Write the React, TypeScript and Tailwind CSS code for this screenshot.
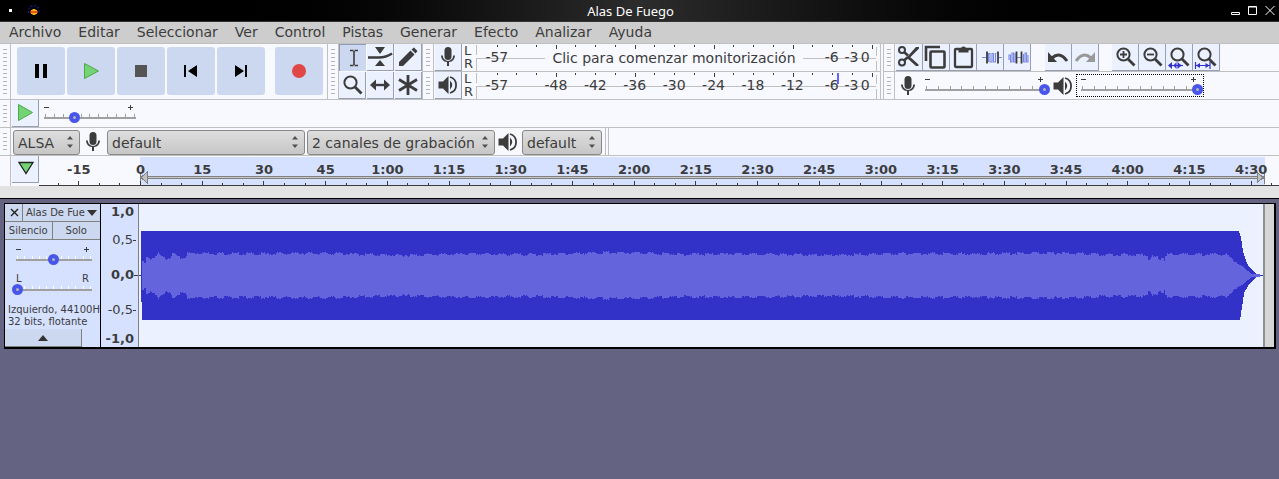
import { ReactNode } from "react";

const ink = "#3c3c3c";

function Grip({ small, plain }: { small?: boolean; plain?: boolean }) {
  const n = plain ? 0 : small ? 5 : 12;
  return (
    <span className="flex w-[11px] shrink-0 flex-col items-center justify-center gap-[3px] border-r border-[#c0c0c0]">
      {Array.from({ length: n }, (_, i) => (
        <i key={i} className="block h-px w-1 bg-[#b4b4b4]" />
      ))}
    </span>
  );
}

function Tool({ label, children, pressed }: { label: string; children: ReactNode; pressed?: boolean }) {
  return (
    <button
      type="button"
      aria-label={label}
      className={
        pressed
          ? "flex h-[27px] w-[27px] shrink-0 items-center justify-center border-t border-l border-[#8c99b8] bg-[#ccd8f0]"
          : "flex h-[27px] w-[27px] shrink-0 items-center justify-center border-r border-b border-[#979fb5] bg-[#ebf1ff]"
      }
    >
      <svg width="26" height="26" viewBox="0 0 26 26" fill="none" stroke={ink} strokeWidth="2">
        {children}
      </svg>
    </button>
  );
}

function MicShape() {
  return (
    <g stroke="none" fill={ink}>
      <rect x="9.5" y="3" width="7" height="13" rx="3.5" />
      <path d="M6 11.5h1.8a5.2 5.4 0 0 0 10.4 0H20a7 7 0 0 1-6 6.6V22h-2v-3.9a7 7 0 0 1-6-6.6z" />
    </g>
  );
}

function SpeakerShape() {
  return (
    <g>
      <path d="M3.5 9.5H8L13.5 4v18L8 16.5H3.5z" fill={ink} stroke="none" />
      <path d="M15 8.5q4.5 4.5 0 9z" fill={ink} stroke="none" />
      <path d="M15 5a8.3 8.3 0 0 1 0 16" strokeWidth="1.8" />
    </g>
  );
}

function Icon({ children }: { children: ReactNode }) {
  return (
    <svg className="shrink-0" width="26" height="26" viewBox="0 0 26 26" fill="none" stroke={ink} aria-hidden="true">
      {children}
    </svg>
  );
}

function Loupe() {
  return (
    <g>
      <circle cx="11.500" cy="10.500" r="6.100" />
      <path d="M15.500 14.500l7 7" strokeWidth="2.800" />
    </g>
  );
}

function Transport({ label, children }: { label: string; children: ReactNode }) {
  return (
    <button type="button" aria-label={label} className="flex size-12 shrink-0 items-center justify-center rounded-[3px] bg-[#ccd8f0]">
      <svg width="24" height="24" viewBox="0 0 24 24">{children}</svg>
    </button>
  );
}

const thumb =
  "[&::-webkit-slider-thumb]:size-[11px] [&::-webkit-slider-thumb]:appearance-none [&::-webkit-slider-thumb]:rounded-full [&::-webkit-slider-thumb]:border-4 [&::-webkit-slider-thumb]:border-[#4855ea] [&::-webkit-slider-thumb]:bg-[#b4b4b4]";

function Slider({ label, value, light, letters }: { label: string; value: number; light?: boolean; letters?: boolean }) {
  return (
    <div className="flex w-full flex-col">
      <span aria-hidden="true" className="flex h-[9px] items-start justify-between pr-[7px] pl-1 text-[10px] leading-[6px]">
        {letters ? (
          <>
            <span>L</span>
            <span>R</span>
          </>
        ) : (
          <>
            <svg width="5" height="7" viewBox="0 0 5 7" stroke={ink}><path d="M0 3.500h5" /></svg>
            <svg width="5" height="7" viewBox="0 0 5 7" stroke={ink}><path d="M0 3.500h5M2.500 1v5" /></svg>
          </>
        )}
      </span>
      <span className="flex h-1 items-end justify-between px-[5px]">
        {Array.from({ length: 11 }, (_, i) => (
          <i key={i} className={light ? "block h-[3px] w-px bg-white" : "block h-[3px] w-px bg-[#a0a0a0]"} />
        ))}
      </span>
      <input
        type="range"
        aria-label={label}
        defaultValue={value}
        className={`-mt-[5px] h-[11px] w-full appearance-none bg-[linear-gradient(#a0a0a0,#a0a0a0)] bg-[length:calc(100%-8px)_2px] bg-center bg-no-repeat ${thumb}`}
      />
    </div>
  );
}

function Choice({ label, value, width }: { label: string; value: string; width: string }) {
  return (
    <div className={`grid h-6 shrink-0 ${width}`}>
      <select
        aria-label={label}
        className="col-start-1 row-start-1 w-full appearance-none overflow-hidden rounded-[3px] border border-[#888888] bg-linear-to-b from-[#dedede] to-[#c6c6c6] pt-px pr-5 pl-1 text-sm leading-[22px] text-[#3c3c3c]"
      >
        <option>{value}</option>
      </select>
      <svg className="pointer-events-none col-start-1 row-start-1 mr-[6px] self-center justify-self-end" width="8" height="14" viewBox="0 0 8 14" fill="#505050">
        <path d="M1 4.500L4 1l3 3.500zM1 9.500h6L4 13z" />
      </svg>
    </div>
  );
}

const levels = ["-57", "", "", "-48", "", "-42", "", "-36", "", "-30", "", "-24", "", "-18", "", "-12", "", "-6", "-3", "0"];

function Meter({ idle, label, children }: { idle?: boolean; label: string; children: ReactNode }) {
  return (
    <div className="flex h-7 border-b border-[#c0c0c0]">
      <Grip small />
      <div className="flex pl-px">
        <Tool label={label}>{children}</Tool>
      </div>
      <div className="flex w-[14px] flex-col pl-[2px] text-[13px] leading-[13px]">
        <span>L</span>
        <span>R</span>
      </div>
      <div className="grid w-[405px] overflow-hidden border-r border-[#c0c0c0]">
        <svg className="col-start-1 row-start-1" width="404" height="27" viewBox="0 0 404 27" shapeRendering="crispEdges">
          <path d="M.5 1v10M.5 27V14.500H400M400.500 3v9M400.500 17v10" stroke="#c0c0c0" fill="none" />
          {levels.map((_, i) => (
            <rect key={i} x={Math.round(20.5 + i * 19.74)} y="1" width="1" height={(i + 1) % 4 === 0 ? 4 : 2} fill={ink} />
          ))}
          {!idle && <rect x="361" y="1" width="2" height="11" fill="#6464ff" />}
        </svg>
        <div className="col-start-1 row-start-1 -mx-px grid grid-cols-20 self-center pb-px pl-[12px] text-sm leading-5">
          {levels.map((t, i) => (
            <span key={i} className={i === 19 ? "flex justify-center pr-3" : "flex justify-center"}>
              {idle && i > 0 && i < 17 ? "" : t}
            </span>
          ))}
        </div>
        {idle && (
          <span className="col-start-1 row-start-1 mr-2 self-center justify-self-center bg-[#f8f9ff] px-[7px] text-sm leading-[18px] whitespace-nowrap">
            Clic para comenzar monitorización
          </span>
        )}
      </div>
    </div>
  );
}

function clock(s: number) {
  return s < 60 ? String(s) : `${Math.floor(s / 60)}:${String(s % 60).padStart(2, "0")}`;
}

const marks = Array.from({ length: 20 }, (_, i) => (i - 1) * 15);

function Timeline() {
  return (
    <div className="grid h-[30px] flex-1 overflow-hidden">
      <svg className="col-start-1 row-start-1 h-[30px] w-full" viewBox="0 0 1240 30" preserveAspectRatio="none" shapeRendering="crispEdges">
        <rect x="101" y="1" width="1125" height="28" fill="#d5e1ff" />
        <path d="M102 21.500h1123" stroke="#808080" strokeWidth="3" />
        <path d="M102 21.500h1123" stroke="#c8c8c8" strokeWidth="1" />
        <path d="M108 16v11l-6-5.500zM1218 16v11l6-5.500z" fill="#c0c0c0" stroke="#808080" />
        <path d="M101.500 16v12M1225.500 16v12" stroke="#808080" />
        {Array.from({ length: 62 }, (_, i) => (
          <rect key={i} x={Math.round(101 + (i - 6) * 20.57)} y={i % 3 === 0 ? 25 : 27} width="1" height={i % 3 === 0 ? 4 : 2} fill={ink} />
        ))}
        <rect x="0" y="29" width="1240" height="1" fill={ink} />
      </svg>
      <div className="col-start-1 row-start-1 -mr-[3px] ml-[9px] grid grid-cols-20 pt-[6px] text-[13px] leading-4 font-bold">
        {marks.map((m) => (
          <span key={m} className="text-center">{clock(m)}</span>
        ))}
      </div>
    </div>
  );
}

function rmsPath() {
  const top: string[] = [];
  const bottom: string[] = [];
  for (let x = 0; x <= 1118; x++) {
    const n = (Math.sin(x * 12.9898) * 43758.5453) % 1;
    let h = 21 + Math.sin(x / 23) * 0.5 + Math.sin(x / 61) * 0.7 + n * 1.5;
    if (x < 45) h -= Math.abs(Math.sin(x / 5)) * 5 + (x < 4 ? 7 : 0);
    if (x > 1006 && x < 1026) h -= 3 - n * 2;
    if (x > 1085) h *= Math.max(0.03, 1 - (x - 1085) / 27);
    h = Math.max(0.5, Math.round(h));
    top.push(`L${x} ${71 - h}h1`);
    bottom.unshift(`L${x + 1} ${72 + h}h-1`);
  }
  return `M0 71${top.join("")}${bottom.join("")}Z`;
}

function Wave() {
  return (
    <svg className="h-[143px] w-full" viewBox="0 0 1125 143" preserveAspectRatio="none" shapeRendering="crispEdges" role="img" aria-label="Forma de onda">
      <path
        d="M2 27H1101L1103 34L1105 48L1107 54L1110 61L1115 67L1120 71H1125V72H1120L1115 76L1110 82L1106 89L1104 103L1102 116H3V98H2V72H0V71H2Z"
        fill="#3232c8"
      />
      <g transform="translate(3 0)">
        <path d={rmsPath()} fill="#6464dc" />
      </g>
    </svg>
  );
}

function TrackPanel() {
  return (
    <div className="flex w-24 shrink-0 flex-col overflow-hidden border-r border-black bg-[#d5e1ff] text-[10px] leading-3">
      <div className="flex h-[18px] border-b border-[#808080]">
        <button type="button" aria-label="Cerrar pista" className="flex w-[18px] shrink-0 items-center justify-center border-r border-[#808080] bg-[#ccd8f0] pl-[2px]">
          <svg width="9" height="9" viewBox="0 0 9 9" stroke="#222"><path d="M1 1l7 7M8 1L1 8" strokeWidth="1.4" /></svg>
        </button>
        <button type="button" className="flex flex-1 items-center justify-between bg-[#ccd8f0] px-[3px] whitespace-nowrap">
          Alas De Fue
          <svg width="10" height="6" viewBox="0 0 10 6" fill="#333"><path d="M0 0h10L5 6z" /></svg>
        </button>
      </div>
      <div className="grid h-[18px] grid-cols-2 border-b border-[#808080] bg-[#ccd8f0]">
        <button type="button" className="border-r border-[#808080]">Silencio</button>
        <button type="button">Solo</button>
      </div>
      <div className="mt-[6px] pr-1 pl-[7px]"><Slider label="Ganancia" value={49} light /></div>
      <div className="mt-[11px] pr-1 pl-[7px]"><Slider label="Panorama" value={0} light letters /></div>
      <p className="mt-[9px] pl-[3px] whitespace-nowrap">Izquierdo, 44100Hz<br />32 bits, flotante</p>
      <button type="button" aria-label="Contraer" className="mt-auto flex h-[18px] w-[77px] items-center justify-center border-r border-b border-[#808080] bg-[#ccd8f0]">
        <svg width="10" height="6" viewBox="0 0 10 6" fill="#333"><path d="M0 6h10L5 0z" /></svg>
      </button>
    </div>
  );
}

export default function App() {
  return (
    <div className="flex min-h-screen flex-col overflow-hidden bg-[#646482] font-['DejaVu_Sans',sans-serif] text-[#3c3c3c]">
      <header className="grid h-[22px] grid-cols-[1fr_auto_1fr] items-center border-b border-[#333] bg-linear-to-r from-black from-15% via-[#2c2c2c] to-black to-90% text-white">
        <span className="flex items-center gap-4 pl-[9px]">
          <i className="block size-[3px] bg-white" />
          <svg width="12" height="12" viewBox="0 0 12 12">
            <path d="M.8 8V5.500Q1 1 5 .8h1.500q4 .4 4.300 4.700V8" fill="none" stroke="#1420a8" strokeWidth="1.100" strokeDasharray="2 1.500" />
            <path d="M4.500 4h3v1H9v4H7.500v1h-3V9H3V5h1.500z" fill="#f0b414" />
            <path d="M2 7h8" stroke="#e03818" strokeWidth="1.500" />
          </svg>
        </span>
        <h1 className="mr-[18px] font-['Noto_Sans',sans-serif] text-[13px] leading-5">Alas De Fuego</h1>
        <span className="flex items-center justify-end gap-2 pr-1">
          <button type="button" aria-label="Minimizar"><svg width="9" height="9" viewBox="0 0 9 9" fill="none" stroke="white"><path d="M.5 6.500h8v2h-8z" /></svg></button>
          <button type="button" aria-label="Maximizar"><svg width="9" height="9" viewBox="0 0 9 9" fill="none" stroke="white"><path d="M.5 1h8M.5.5h8v8h-8z" /></svg></button>
          <button type="button" aria-label="Cerrar"><svg width="10" height="9" viewBox="0 0 10 9" stroke="white"><path d="M.5 0l9 9M9.500 0l-9 9" /></svg></button>
        </span>
      </header>

      <nav className="flex h-[21px] items-center gap-[17px] bg-[#cdcdcd] pb-[2px] pl-[9px] text-sm leading-5">
        {["Archivo", "Editar", "Seleccionar", "Ver", "Control", "Pistas", "Generar", "Efecto", "Analizar", "Ayuda"].map((m) => (
          <button key={m} type="button">{m}</button>
        ))}
      </nav>

      <main className="flex flex-1 flex-col">
        <section className="flex h-[57px] border-y border-[#c0c0c0] bg-[#f8f9ff]">
          <Grip />
          <div className="flex gap-[2px] border-r border-[#c0c0c0] py-[3px] pr-1 pl-[6px]">
            <Transport label="Pausa"><path d="M6 5h4v14H6zM14 5h4v14h-4z" /></Transport>
            <Transport label="Reproducir"><path d="M5.500 4.500v15l14-7.500z" fill="#74d474" stroke="#4ba94b" /></Transport>
            <Transport label="Detener"><path d="M6 6h12v12H6z" fill="#555" /></Transport>
            <Transport label="Ir al inicio"><path d="M5 6h2v12H5zM18 6v12l-9-6z" /></Transport>
            <Transport label="Ir al final"><path d="M6 6v12l9-6zM16 6h2v12h-2z" /></Transport>
            <span className="w-[6px]" />
            <Transport label="Grabar"><circle cx="12" cy="12" r="7" fill="#e04848" /></Transport>
          </div>
          <Grip />
          <div className="grid grid-cols-3 content-start gap-px">
            <Tool label="Selección" pressed><path d="M10 5.500h3.500M14.500 5.500H18M10 20.500h3.500M14.500 20.500H18M14 6v14" strokeWidth="1.600" /></Tool>
            <Tool label="Envolvente"><path d="M1 13.500h11q7 0 13-4" strokeWidth="2.600" /><path d="M8 3h10l-5 7zM8 22h10l-5-6z" fill={ink} stroke="none" /></Tool>
            <Tool label="Dibujo"><path d="M4 22v-4L15.500 6.500l4 4L8 22zM16.500 5.500L19 3.500l3.500 3.500-2 2.500z" fill={ink} stroke="none" /></Tool>
            <Tool label="Ampliación"><Loupe /></Tool>
            <Tool label="Desplazamiento"><path d="M7 13h12" strokeWidth="2.400" /><path d="M3 13l6-5.500v11zM23 13l-6-5.500v11z" fill={ink} stroke="none" /></Tool>
            <Tool label="Multiherramienta"><path d="M13 3v20M4 7.500l18 11M22 7.500l-18 11" strokeWidth="2.800" /></Tool>
          </div>
          <div className="flex flex-col border-l border-[#c0c0c0]">
            <Meter idle label="Medidor de grabación"><MicShape /></Meter>
            <Meter label="Medidor de reproducción"><SpeakerShape /></Meter>
          </div>
          <div className="ml-[2px] flex flex-1 flex-col border-l border-[#c0c0c0]">
            <div className="flex h-7 border-b border-[#c0c0c0]">
              <Grip small />
              <div className="flex pl-px">
                <Tool label="Cortar"><circle cx="6" cy="6" r="3" /><circle cx="6" cy="18.500" r="3" /><path d="M8 8l4 3.500M8 16.500l4-3.500" strokeWidth="2.600" /><path d="M11 13L20 3h3v1.500L13 14.500zM13 12l9.500 8.500v1.500H20l-9.500-8.500z" fill={ink} stroke="none" /></Tool>
                <Tool label="Copiar"><path d="M3 17V3h14" strokeWidth="2.600" /><rect x="7.500" y="7.500" width="14" height="16" rx="1" strokeWidth="2.600" /></Tool>
                <Tool label="Pegar"><rect x="5" y="5" width="17" height="18" rx="1" strokeWidth="2.300" /><path d="M8.500 5H11a2.500 2.500 0 0 1 5 0h2.500v3.500h-10z" fill={ink} stroke="none" /></Tool>
                <Tool label="Recortar"><path d="M5 13.500h4M22 13.500h3M11.500 18V9.500h1.500V18h2V9.500h1.500V18h2V9.500h1" stroke="#7888e8" strokeWidth="1.100" /><path d="M10 7.500v12M21 7.500v12" strokeWidth="1.800" /></Tool>
                <Tool label="Silenciar"><path d="M5 16v-5h1.500v7h1.500V9h1.500v9h1.500V9M13 13.500h4M19.500 10v8h1.500V9h1.500v9H24v-7" stroke="#7888e8" strokeWidth="1.100" /><path d="M12.500 7.500v12M17.500 7.500v12" strokeWidth="1.800" /></Tool>
              </div>
              <div className="ml-[14px] flex">
                <Tool label="Deshacer"><path d="M7 14q8-7 15 3" strokeWidth="3" /><path d="M3 8v10h9z" fill={ink} stroke="none" /></Tool>
                <Tool label="Rehacer"><path d="M19 14q-8-7-15 3" stroke="#999" strokeWidth="3" /><path d="M23 8v10h-9z" fill="#999" stroke="none" /></Tool>
              </div>
              <div className="ml-[13px] flex">
                <Tool label="Acercar"><Loupe /><path d="M8 10.500h7M11.500 7v7" strokeWidth="1.800" /></Tool>
                <Tool label="Alejar"><Loupe /><path d="M8 10.500h7" strokeWidth="1.800" /></Tool>
                <Tool label="Ajustar selección"><Loupe /><path d="M3 21.500h14" stroke="#3232c8" strokeWidth="1.200" /><path d="M2 21.500l4-3.500v7zM10.500 18v7l-3-3.500zM11.500 18v7l4-3.500z" fill="#3232c8" stroke="none" /></Tool>
                <Tool label="Ajustar proyecto"><Loupe /><path d="M2.500 18v7M17 18v7M3 21.500h14" stroke="#3232c8" strokeWidth="1.200" /><path d="M3 21.500l4-2.500v5zM16.500 21.500l-4-2.500v5z" fill="#3232c8" stroke="none" /></Tool>
              </div>
            </div>
            <div className="flex h-7">
              <Grip small />
              <div className="flex items-center"><Icon><MicShape /></Icon></div>
              <div className="w-[129px] pt-1"><Slider label="Volumen de grabación" value={100} /></div>
              <div className="flex items-center"><Icon><SpeakerShape /></Icon></div>
              <div className="my-[2px] w-32 border border-dotted border-black pt-px"><Slider label="Volumen de reproducción" value={100} /></div>
            </div>
          </div>
        </section>

        <section className="flex h-7 border-b border-[#c0c0c0] bg-[#f8f9ff]">
          <Grip small />
          <div className="pl-px"><Tool label="Reproducir a velocidad"><path d="M6.500 4.500v16l14-8z" fill="#74d474" stroke="#4ba94b" strokeWidth="1" /></Tool></div>
          <div className="w-[101px] pt-1 pl-px"><Slider label="Velocidad de reproducción" value={33} /></div>
        </section>

        <section className="flex h-7 items-stretch border-b border-[#c0c0c0] bg-[#f8f9ff]">
          <Grip small />
          <div className="flex items-center border-r border-[#c0c0c0] pr-[3px] pl-[2px]">
            <Choice label="Servidor de audio" value="ALSA" width="w-[67px]" />
            <Icon><MicShape /></Icon>
            <Choice label="Dispositivo de grabación" value="default" width="w-[198px] ml-px" />
            <Choice label="Canales de grabación" value="2 canales de grabación" width="w-[188px] ml-[2px]" />
            <Icon><SpeakerShape /></Icon>
            <Choice label="Dispositivo de reproducción" value="default" width="w-[80px] ml-px" />
          </div>
          <span className="ml-[2px] border-l border-[#c0c0c0]" />
        </section>

        <section className="flex h-[30px] bg-[#f8f9ff]">
          <Grip plain />
          <div className="pl-px">
            <Tool label="Opciones de línea de tiempo"><path d="M7 6.500h14l-7 11z" fill="#74d474" stroke="#222" strokeWidth="1.300" /></Tool>
          </div>
          <Timeline />
        </section>
        <div className="h-[13px] border-b border-black bg-[#e3e3e3]" />

        <section className="flex flex-1 flex-col pt-1 pr-[3px] pl-1">
          <div className="flex h-[146px] border-t border-r-2 border-b-2 border-l border-black">
            <TrackPanel />
            <div className="grid w-[38px] shrink-0 grid-rows-[22px_28px_42px_28px_23px] items-center justify-items-end border-r border-[#808080] bg-[#d5e1ff] pr-1 text-[13px] leading-4">
              <b className="self-start">1,0</b>
              <span className="flex items-center">0,5<i className="-mr-[2px] block h-px w-[3px] bg-[#3c3c3c]" /></span>
              <b className="flex items-center">0,0<i className="-mr-1 block h-px w-1 bg-[#3c3c3c]" /></b>
              <span className="flex items-center">-0,5<i className="-mr-[2px] block h-px w-[3px] bg-[#3c3c3c]" /></span>
              <b className="self-end">-1,0</b>
            </div>
            <div className="flex-1 bg-[#ebf1ff]"><Wave /></div>
            <div className="w-[11px] border-l-2 border-[#909090] bg-[#d6d6d6]" />
          </div>
        </section>
      </main>
    </div>
  );
}
